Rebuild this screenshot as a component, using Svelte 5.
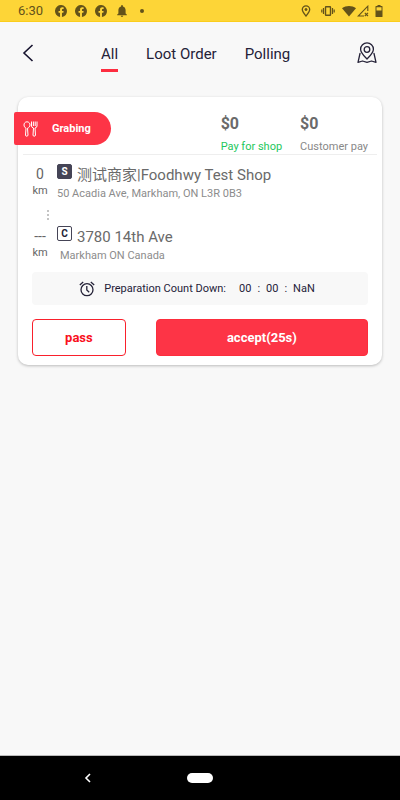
<script>
	let tabs = ['All', 'Loot Order', 'Polling'];
	let active = 'All';

	let order = {
		status: 'Grabing',
		shopPay: '$0',
		customerPay: '$0',
		shop: { distance: '0', name: '测试商家|Foodhwy Test Shop', address: '50 Acadia Ave, Markham, ON L3R 0B3' },
		customer: { distance: '---', name: '3780 14th Ave', address: 'Markham ON Canada' },
		countdown: ['00', '00', 'NaN'],
		seconds: 25
	};
</script>

<div class="screen">
	<div class="status-bar">
		<span class="time">6:30</span>
		{#each [1, 2, 3] as n}
			<svg class="fb" width="12" height="12" viewBox="0 0 24 24">
				<path fill="#63521a" d="M24 12A12 12 0 1 0 10.1 23.9v-8.4H7.1V12h3V9.4c0-3 1.8-4.7 4.5-4.7 1.3 0 2.7.3 2.7.3v2.9h-1.5c-1.5 0-1.9.9-1.9 1.9V12h3.3l-.5 3.5h-2.8v8.4A12 12 0 0 0 24 12z" />
			</svg>
		{/each}
		<svg class="bell" width="10" height="12" viewBox="0 0 16 20">
			<path fill="#63521a" d="M8 20c1.2 0 2-.8 2-2H6c0 1.2.8 2 2 2zm6-6V8.500c0-3-1.600-5.500-4.500-6.200V1.500a1.500 1.500 0 0 0-3 0v.8C3.600 3 2 5.500 2 8.500V14l-2 2v1h16v-1z" />
		</svg>
		<span class="dot"></span>
		<div class="system">
			<svg width="10" height="12" viewBox="0 0 10 12" fill="none" stroke="#63521a">
				<path stroke-width="1.300" d="M5 11C3 8.500 1.300 6.500 1.300 4.500a3.700 3.700 0 0 1 7.400 0C8.700 6.500 7 8.500 5 11z" />
				<circle cx="5" cy="4.500" r="1" fill="#63521a" />
			</svg>
			<svg class="vibrate" width="14" height="12" viewBox="0 0 14 12" fill="none" stroke="#63521a">
				<rect x="4.500" y="1.700" width="5" height="8.600" rx="0.500" stroke-width="1.400" />
				<path stroke-width="1.200" d="M2.500 3v6M.8 4.500v3M11.500 3v6M13.200 4.500v3" />
			</svg>
			<svg class="wifi" width="14" height="12" viewBox="0 0 14 12">
				<path fill="#63521a" d="M0 3.200C4 .2 10 .2 14 3.200L7 11.500z" />
			</svg>
			<svg class="signal" width="12" height="12" viewBox="0 0 12 12" fill="none" stroke="#63521a">
				<path stroke-width="1.100" d="M7 11H1.200L10.800 1.200V6M7.800 7.800l3.200 3.200M11 7.800L7.800 11" />
			</svg>
			<svg class="battery" width="8" height="12" viewBox="0 0 8 12">
				<path fill="#63521a" fill-rule="evenodd" d="M2.500 0h3v1H7q.5 0 .5.500v10q0 .5-.5.500H1q-.5 0-.5-.5v-10Q.5 1 1 1h1.500zM1.500 2.200V5.500h5V2.200z" />
			</svg>
		</div>
	</div>

	<header>
		<button class="back" aria-label="Back">
			<svg width="12" height="18" viewBox="0 0 12 18" fill="none" stroke="#16132e" stroke-width="1.600">
				<path d="M10.500 1L2 9l8.500 8" />
			</svg>
		</button>
		<nav>
			{#each tabs as tab}
				<button class="tab" class:active={tab === active} on:click={() => (active = tab)}>{tab}</button>
			{/each}
		</nav>
		<button class="map" aria-label="Map">
			<svg width="20" height="22" viewBox="0 0 20 22" fill="none" stroke="#252238" stroke-width="1.300" stroke-linejoin="round" stroke-linecap="round">
				<path d="M10 17C6.500 13.500 3.600 11 3.600 7.300a6.400 6.400 0 0 1 12.800 0C16.400 11 13.500 13.500 10 17z" />
				<circle cx="10" cy="7.500" r="2.800" />
				<path d="M3 11.500L1 20.300l4.500-1.300L10 20.300l4.500-1.300 4.500 1.300-2-8.800" />
			</svg>
		</button>
	</header>

	<main>
		<section class="card">
			<div class="top">
				<div class="badge">
					<svg width="15" height="16" viewBox="0 0 15 16" fill="none" stroke="#fff">
						<path d="M4 .8C2 .8 1 2.400 1 4s1 2.700 2 3.200L2.500 14q0 1.200 1.200 1.200T5 14l-.5-6.800C6 6.700 7 5.500 7 4S6 .8 4 .8z" />
						<path d="M8.500.5V5q0 1.500 2 2L10 14q0 1.200 1.200 1.200T12.500 14L12 7q2-.5 2-2V.5M10.400.5V5M12.200.5V5" />
					</svg>
					<span>{order.status}</span>
				</div>
				<div class="pay">
					<strong>{order.shopPay}</strong>
					<span class="green">Pay for shop</span>
				</div>
				<div class="pay">
					<strong>{order.customerPay}</strong>
					<span>Customer pay</span>
				</div>
			</div>

			<div class="stop">
				<div class="distance"><span>{order.shop.distance}</span><small>km</small></div>
				<div class="place">
					<h2><i class="mark dark">S</i>{order.shop.name}</h2>
					<p>{order.shop.address}</p>
				</div>
			</div>
			<div class="dots"><i></i><i></i><i></i></div>
			<div class="stop">
				<div class="distance"><span>{order.customer.distance}</span><small>km</small></div>
				<div class="place">
					<h2><i class="mark">C</i>{order.customer.name}</h2>
					<p class="indent">{order.customer.address}</p>
				</div>
			</div>

			<div class="countdown">
				<svg width="16" height="16" viewBox="0 0 16 16" fill="none" stroke="#252238" stroke-width="1.300">
					<circle cx="8" cy="8.700" r="6" />
					<path d="M7.800 5v4l2.400 2.200M.8 4L4.200 1M15.200 4l-3.400-3" />
				</svg>
				<span class="label">Preparation Count Down:</span>
				{#each order.countdown as part, i}
					{#if i > 0}<span class="colon">:</span>{/if}
					<span>{part}</span>
				{/each}
			</div>

			<div class="actions">
				<button class="pass">pass</button>
				<button class="accept">accept({order.seconds}s)</button>
			</div>
		</section>
	</main>

	<footer>
		<button class="system-back" aria-label="System back">
			<svg width="8" height="10" viewBox="0 0 8 10" fill="none" stroke="#fff" stroke-width="1.600">
				<path d="M6 1L2 5l4 4" />
			</svg>
		</button>
		<button class="home" aria-label="Home"></button>
	</footer>
</div>

<style>
	:global(body) {
		background: #f8f8f8;
	}

	.screen {
		display: flex;
		flex-direction: column;
		min-height: 100vh;
		font-family: Roboto, 'Noto Sans CJK SC', sans-serif;
		color: #252238;
	}

	button {
		padding: 0;
		border: none;
		background: none;
		font-family: inherit;
		color: inherit;
		cursor: pointer;
	}

	svg {
		display: block;
		flex: none;
	}

	.status-bar {
		display: flex;
		align-items: center;
		height: 22px;
		box-sizing: border-box;
		padding: 0 17px 0 18px;
		background: #fdd537;
		border-bottom: 1px solid #fbcd1c;
		color: #63521a;
	}

	.time {
		width: 37px;
		font-size: 13px;
	}

	.fb {
		margin-right: 8px;
	}

	.bell {
		margin-left: 2px;
	}

	.dot {
		width: 4px;
		height: 4px;
		margin-left: 13px;
		border-radius: 50%;
		background: #63521a;
	}

	.system {
		display: flex;
		margin-left: auto;
	}

	.vibrate {
		margin-left: 10px;
	}

	.wifi {
		margin-left: 7px;
	}

	.signal {
		margin-left: 1px;
	}

	.battery {
		margin-left: 6px;
	}

	header {
		display: flex;
		align-items: center;
		height: 64px;
		padding: 0 23px 0 22px;
	}

	.back,
	.map {
		margin-bottom: 2px;
	}

	nav {
		display: flex;
		flex: 1;
		gap: 28px;
		margin-left: 67px;
	}

	.tab {
		height: 36px;
		border-top: 3px solid transparent;
		border-bottom: 3px solid transparent;
		font-size: 15px;
	}

	.tab.active {
		border-bottom-color: #fd2d40;
	}

	main {
		flex: 1;
		padding: 11px 18px;
	}

	.card {
		padding: 0 14px 9px;
		border-radius: 10px;
		background: #fff;
		box-shadow: 0 1px 3px rgba(0, 0, 0, 0.25);
	}

	.top {
		display: flex;
		align-items: flex-start;
		height: 57px;
		margin: 0 -9px 9px;
		border-bottom: 1px solid #eee;
	}

	.badge {
		display: flex;
		align-items: center;
		gap: 14px;
		width: 97px;
		height: 33px;
		margin: 15px auto 0 -9px;
		padding-left: 9px;
		box-sizing: border-box;
		border-radius: 2px 17px 17px 2px;
		background: #fd3446;
		color: #fff;
		font-size: 11px;
		font-weight: 700;
	}

	.pay {
		display: flex;
		flex-direction: column;
		gap: 6px;
		padding-top: 17px;
		margin-right: 9px;
		font-size: 11px;
		line-height: 14px;
		color: #888;
	}

	.pay + .pay {
		margin-left: 9px;
	}

	.pay strong {
		font-size: 16px;
		line-height: 20px;
		font-weight: 700;
		color: #6a6a6a;
	}

	.pay .green {
		color: #1dc75c;
	}

	.stop {
		display: flex;
		gap: 9px;
		height: 38px;
	}

	.distance {
		display: flex;
		flex-direction: column;
		width: 16px;
		align-items: center;
		color: #666;
		font-size: 14px;
		line-height: 20px;
	}

	.distance small {
		font-size: 11px;
		line-height: 14px;
	}

	h2 {
		display: flex;
		gap: 5px;
		margin: 0;
		font-size: 15px;
		line-height: 22px;
		font-weight: 400;
		color: #6a6a6a;
	}

	.mark {
		width: 15px;
		height: 15px;
		box-sizing: border-box;
		border: 1px solid #454456;
		border-radius: 2px;
		font-size: 10px;
		line-height: 13px;
		font-style: normal;
		font-weight: 700;
		text-align: center;
		color: #252238;
	}

	.mark.dark {
		background: #454456;
		color: #fff;
	}

	.place p {
		margin: 1px 0 0;
		font-size: 11px;
		line-height: 14px;
		color: #8c8c8c;
	}

	.place p.indent {
		padding-left: 3px;
	}

	.dots {
		display: flex;
		flex-direction: column;
		align-items: flex-start;
		gap: 2px;
		height: 16px;
		padding: 8px 0 0 15px;
	}

	.dots i {
		width: 2px;
		height: 2px;
		background: #c4c4c4;
	}

	.countdown {
		display: flex;
		align-items: center;
		justify-content: center;
		height: 33px;
		margin-top: 8px;
		padding-right: 6px;
		border-radius: 4px;
		background: #f8f8f8;
		font-size: 11px;
	}

	.label {
		margin: 0 13px 0 9px;
	}

	.colon {
		margin: 0 6px;
	}

	.actions {
		display: flex;
		gap: 30px;
		margin-top: 14px;
	}

	.actions button {
		height: 37px;
		border-radius: 4px;
		font-size: 13px;
		font-weight: 700;
	}

	.pass {
		flex: 93;
		border: 1px solid #f9202c;
		color: #f9101c;
	}

	.accept {
		flex: 213;
		border: 1px solid #fd2d3c;
		background: #fd3446;
		color: #fff;
	}

	footer {
		display: grid;
		grid-template-columns: 1fr auto 1fr;
		align-items: center;
		height: 44px;
		border-top: 1px solid #bbb;
		background: #000;
	}

	.system-back {
		justify-self: center;
		margin-right: 12px;
	}

	.home {
		width: 26px;
		height: 10px;
		border-radius: 5px;
		background: #fff;
	}
</style>
